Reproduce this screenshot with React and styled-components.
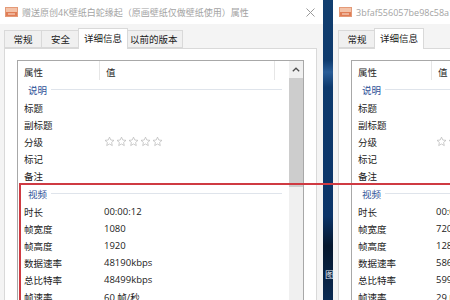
import React from "react";
import styled, { createGlobalStyle } from "styled-components";

const GlobalStyle = createGlobalStyle`
  html, body { margin: 0; padding: 0; }
  body {
    width: 450px;
    height: 300px;
    overflow: hidden;
    background: #0c3566;
    font-family: "Open Sans", "Noto Sans CJK SC", sans-serif;
    font-size: 9.5px;
  }
`;

const leftRows = [
  { group: "说明" },
  { name: "标题" },
  { name: "副标题" },
  { name: "分级", stars: true },
  { name: "标记" },
  { name: "备注" },
  { group: "视频" },
  { name: "时长", value: "00:00:12" },
  { name: "帧宽度", value: "1080" },
  { name: "帧高度", value: "1920" },
  { name: "数据速率", value: "48190kbps" },
  { name: "总比特率", value: "48499kbps" },
  { name: "帧速率", value: "60 帧/秒" },
];

const rightRows = [
  { group: "说明" },
  { name: "标题" },
  { name: "副标题" },
  { name: "分级", stars: true },
  { name: "标记" },
  { name: "备注" },
  { group: "视频" },
  { name: "时长", value: "00:00:15" },
  { name: "帧宽度", value: "720" },
  { name: "帧高度", value: "1280" },
  { name: "数据速率", value: "5866kbps" },
  { name: "总比特率", value: "5996kbps" },
  { name: "帧速率", value: "29 帧/秒" },
];

const FileIcon = () => (
  <svg width="13" height="10" viewBox="0 0 13 10">
    <rect x="0.5" y="0.5" width="12" height="9" fill="#f3c2a8" stroke="#e49a78" />
    <rect x="1" y="5" width="11" height="4" fill="#e07d55" />
    <rect x="3" y="6.5" width="7" height="1" fill="#fbe3d6" />
  </svg>
);

const Star = () => (
  <svg width="11" height="11" viewBox="0 0 24 24">
    <path
      d="M12 2.5l2.9 6.3 6.9.7-5.2 4.6 1.5 6.8L12 17.4l-6.1 3.5 1.5-6.8-5.2-4.6 6.9-.7z"
      fill="none"
      stroke="#b9b9b9"
      strokeWidth="1.6"
      strokeLinejoin="round"
    />
  </svg>
);

const PropertiesWindow = ({ title, tabs, selected, inset, width, nameWidth, rows, scrollbar, closeButton }) => (
  <Window $width={width}>
    <TitleBar $inset={inset + 1}>
      <FileIcon />
      <Title>{title}</Title>
      {closeButton && (
        <Close>
          <svg width="9" height="9" viewBox="0 0 9 9">
            <path d="M0.5 0.5l8 8M8.5 0.5l-8 8" stroke="#9a9a9a" strokeWidth="1" />
          </svg>
        </Close>
      )}
    </TitleBar>
    <Body $inset={inset}>
      <TabStrip>
        {tabs.map((t) => (
          <Tab key={t} $active={t === selected}>
            {t}
          </Tab>
        ))}
      </TabStrip>
      <TabPage>
        <ListView>
          <ListContent>
            <Header>
              <HeaderCell $w={nameWidth}>属性</HeaderCell>
              <HeaderCell $w={175}>值</HeaderCell>
            </Header>
            {rows.map((r, i) =>
              r.group ? (
                <GroupRow key={i}>
                  <span>{r.group}</span>
                  <GroupLine />
                </GroupRow>
              ) : (
                <Row key={i}>
                  <Name $w={nameWidth}>{r.name}</Name>
                  <Value>
                    {r.stars ? (
                      <Stars>
                        {[0, 1, 2, 3, 4].map((s) => (
                          <Star key={s} />
                        ))}
                      </Stars>
                    ) : (
                      r.value
                    )}
                  </Value>
                </Row>
              )
            )}
          </ListContent>
          {scrollbar && (
            <Scrollbar>
              <ScrollArrow>
                <svg width="8" height="5" viewBox="0 0 8 5">
                  <path d="M0.8 4.3L4 1.2l3.2 3.1" fill="none" stroke="#505050" strokeWidth="1.3" />
                </svg>
              </ScrollArrow>
              <ScrollThumb $h={109} />
            </Scrollbar>
          )}
        </ListView>
      </TabPage>
    </Body>
  </Window>
);

const App = () => (
  <>
    <GlobalStyle />
    <Desktop>
      <PropertiesWindow
        title="赠送原创4K壁纸白蛇缘起（原画壁纸仅做壁纸使用）属性"
        tabs={["常规", "安全", "详细信息", "以前的版本"]}
        selected="详细信息"
        inset={4}
        width={323}
        nameWidth={82}
        rows={leftRows}
        scrollbar
        closeButton
      />
      <DesktopStrip>
        <DesktopLabel>图</DesktopLabel>
      </DesktopStrip>
      <PropertiesWindow
        title="3bfaf556057be98c58a1e0d2b4f7c9.mp4 属性"
        tabs={["常规", "详细信息"]}
        selected="详细信息"
        inset={5}
        width={320}
        nameWidth={80}
        rows={rightRows}
      />
      <Highlight />
    </Desktop>
  </>
);

export default App;

const Desktop = styled.div`
  position: relative;
  display: flex;
  width: 450px;
  height: 300px;
  overflow: hidden;
`;

const Window = styled.div`
  display: flex;
  flex-direction: column;
  width: ${(p) => p.$width}px;
  flex-shrink: 0;
  height: 300px;
  background: #f4f4f4;
`;

const TitleBar = styled.div`
  display: flex;
  align-items: center;
  gap: 4px;
  height: 24px;
  padding-left: ${(p) => p.$inset}px;
  background: #ffffff;
  flex-shrink: 0;
`;

const Title = styled.div`
  flex: 1;
  min-width: 0;
  color: #a3a3a3;
  font-size: 9px;
  white-space: nowrap;
  overflow: hidden;
`;

const Close = styled.div`
  display: flex;
  margin-right: 8px;
  margin-left: 10px;
`;

const Body = styled.div`
  flex: 1;
  min-height: 0;
  display: flex;
  flex-direction: column;
  padding: 0 6px 0 ${(p) => p.$inset}px;
`;

const TabStrip = styled.div`
  position: relative;
  z-index: 1;
  display: flex;
  align-items: flex-end;
  height: 24px;
  flex-shrink: 0;
`;

const Tab = styled.div`
  display: flex;
  align-items: center;
  justify-content: center;
  box-sizing: border-box;
  min-width: ${(p) => (p.$active ? 48 : 38)}px;
  height: ${(p) => (p.$active ? 21 : 18)}px;
  padding: 0 ${(p) => (p.$active ? 5 : 4)}px ${(p) => (p.$active ? 2 : 0)}px;
  margin: 0 ${(p) => (p.$active ? -2 : 0)}px ${(p) => (p.$active ? -1 : 0)}px;
  background: ${(p) => (p.$active ? "#ffffff" : "#f0f0f0")};
  border: 1px solid #d9d9d9;
  border-bottom: ${(p) => (p.$active ? "none" : "1px solid #d9d9d9")};
  border-left: ${(p) => (p.$active ? "1px solid #d9d9d9" : "none")};
  color: #1a1a1a;
  white-space: nowrap;
  position: relative;
  z-index: ${(p) => (p.$active ? 2 : 1)};
  &:first-child {
    border-left: 1px solid #d9d9d9;
  }
`;

const TabPage = styled.div`
  flex: 1;
  min-height: 0;
  display: flex;
  flex-direction: column;
  background: #ffffff;
  border: 1px solid #d9d9d9;
  border-bottom: none;
  padding: 11px 12px 0;
`;

const ListView = styled.div`
  flex: 1;
  min-height: 0;
  display: flex;
  border: 1px solid #a8a8a8;
  border-bottom: none;
  overflow: hidden;
`;

const ListContent = styled.div`
  flex: 1;
  min-width: 0;
  overflow: hidden;
`;

const Header = styled.div`
  display: flex;
  height: 19px;
`;

const HeaderCell = styled.div`
  display: flex;
  align-items: center;
  box-sizing: border-box;
  width: ${(p) => p.$w}px;
  flex-shrink: 0;
  padding: 2px 0 0 6px;
  border-right: 1px solid #e6e6e6;
  color: #2a2a2a;
`;

const GroupRow = styled.div`
  display: flex;
  align-items: center;
  height: 19px;
  padding: 0 7px 0 10px;
  color: #2f5298;
`;

const GroupLine = styled.div`
  flex: 1;
  height: 1px;
  margin-left: 4px;
  background: #dfe4eb;
`;

const Row = styled.div`
  display: flex;
  align-items: center;
  height: 17px;
  color: #222222;
  white-space: nowrap;
`;

const Name = styled.div`
  box-sizing: border-box;
  width: ${(p) => p.$w}px;
  flex-shrink: 0;
  padding-left: 6px;
`;

const Value = styled.div`
  padding-left: 4px;
`;

const Stars = styled.div`
  display: flex;
  gap: 1px;
`;

const Scrollbar = styled.div`
  display: flex;
  flex-direction: column;
  width: 14px;
  flex-shrink: 0;
  background: #f0f0f0;
`;

const ScrollArrow = styled.div`
  display: flex;
  align-items: center;
  justify-content: center;
  height: 17px;
`;

const ScrollThumb = styled.div`
  height: ${(p) => p.$h}px;
  background: #cdcdcd;
`;

const DesktopStrip = styled.div`
  position: relative;
  width: 10px;
  flex-shrink: 0;
  background: linear-gradient(
    to bottom,
    #123f70 0%,
    #0e3a6d 20%,
    #2a5d97 24%,
    #0e3a6d 29%,
    #0b3468 72%,
    #06172d 82%,
    #0a2a52 100%
  );
`;

const DesktopLabel = styled.div`
  position: absolute;
  left: 2px;
  top: 268px;
  color: #e8eef6;
  font-size: 9px;
`;

const Highlight = styled.div`
  position: absolute;
  left: 19px;
  top: 183px;
  width: 460px;
  height: 160px;
  border: 2px solid #cf3a42;
  pointer-events: none;
`;
